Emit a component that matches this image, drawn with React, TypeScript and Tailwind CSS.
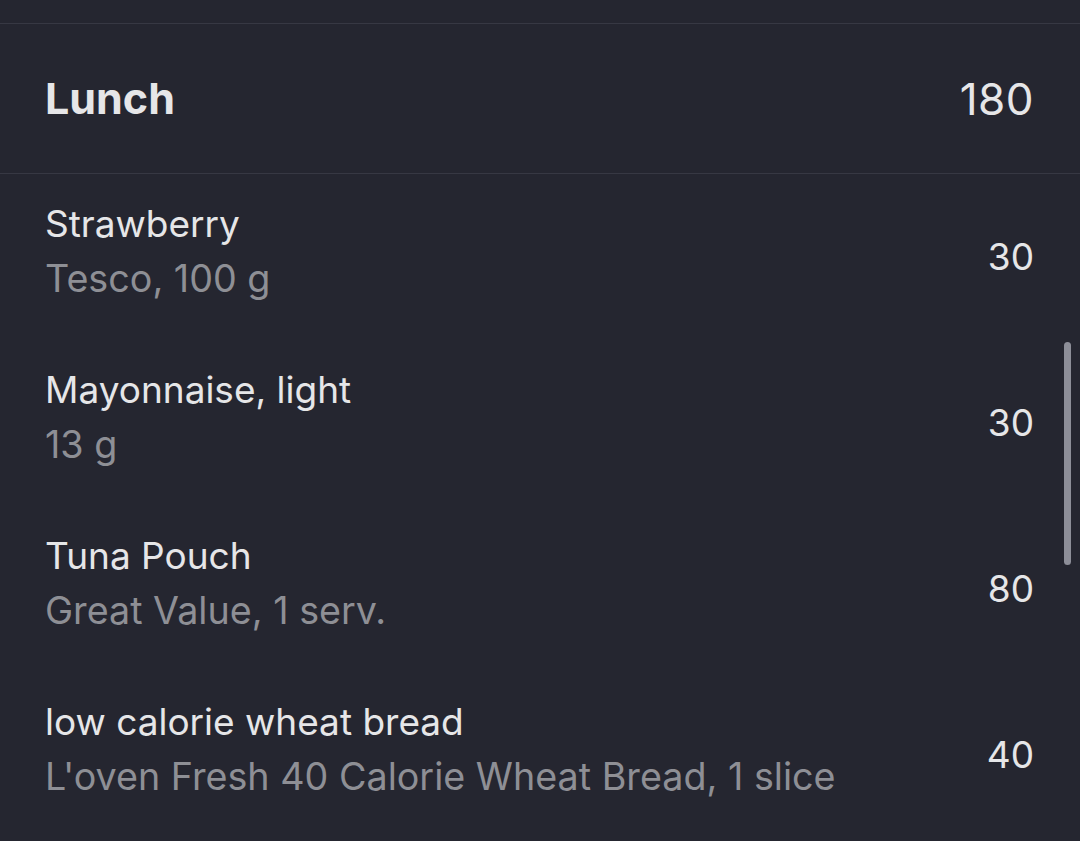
import React from 'react';

const items = [
  { name: 'Strawberry', detail: 'Tesco, 100 g', kcal: 30 },
  { name: 'Mayonnaise, light', detail: '13 g', kcal: 30 },
  { name: 'Tuna Pouch', detail: 'Great Value, 1 serv.', kcal: 80 },
  { name: 'low calorie wheat bread', detail: "L'oven Fresh 40 Calorie Wheat Bread, 1 slice", kcal: 40 },
];

export default function App() {
  return (
    <div
      className="relative w-[1080px] h-[841px] overflow-hidden bg-[#252630]"
      style={{ fontFamily: 'Inter, "Liberation Sans", sans-serif' }}
    >
      <div className="h-[23px]" />
      <div className="border-t border-b border-[#373843]">
        <div className="flex items-center justify-between h-[149px] pl-[45px] pr-[46px]">
          <h2 className="text-[43px] font-bold text-[#e6e6e8]">Lunch</h2>
          <span className="text-[44px] tracking-[0.5px] text-[#e6e6e8]">180</span>
        </div>
      </div>

      <ul>
        {items.map((item) => (
          <li key={item.name} className="flex items-center justify-between h-[166px] pl-[45px] pr-[46px]">
            <div className="flex flex-col pb-[12px]">
              <span className="text-[37px] leading-[55px] text-[#e6e6e8]">{item.name}</span>
              <span className="text-[37.7px] leading-[55px] text-[#8e8f95]">{item.detail}</span>
            </div>
            <span className="text-[37px] text-[#e6e6e8]">{item.kcal}</span>
          </li>
        ))}
      </ul>

      <div className="absolute left-[1064px] top-[342px] w-[7px] h-[223px] rounded-full bg-[#8d8e98]" />
    </div>
  );
}
